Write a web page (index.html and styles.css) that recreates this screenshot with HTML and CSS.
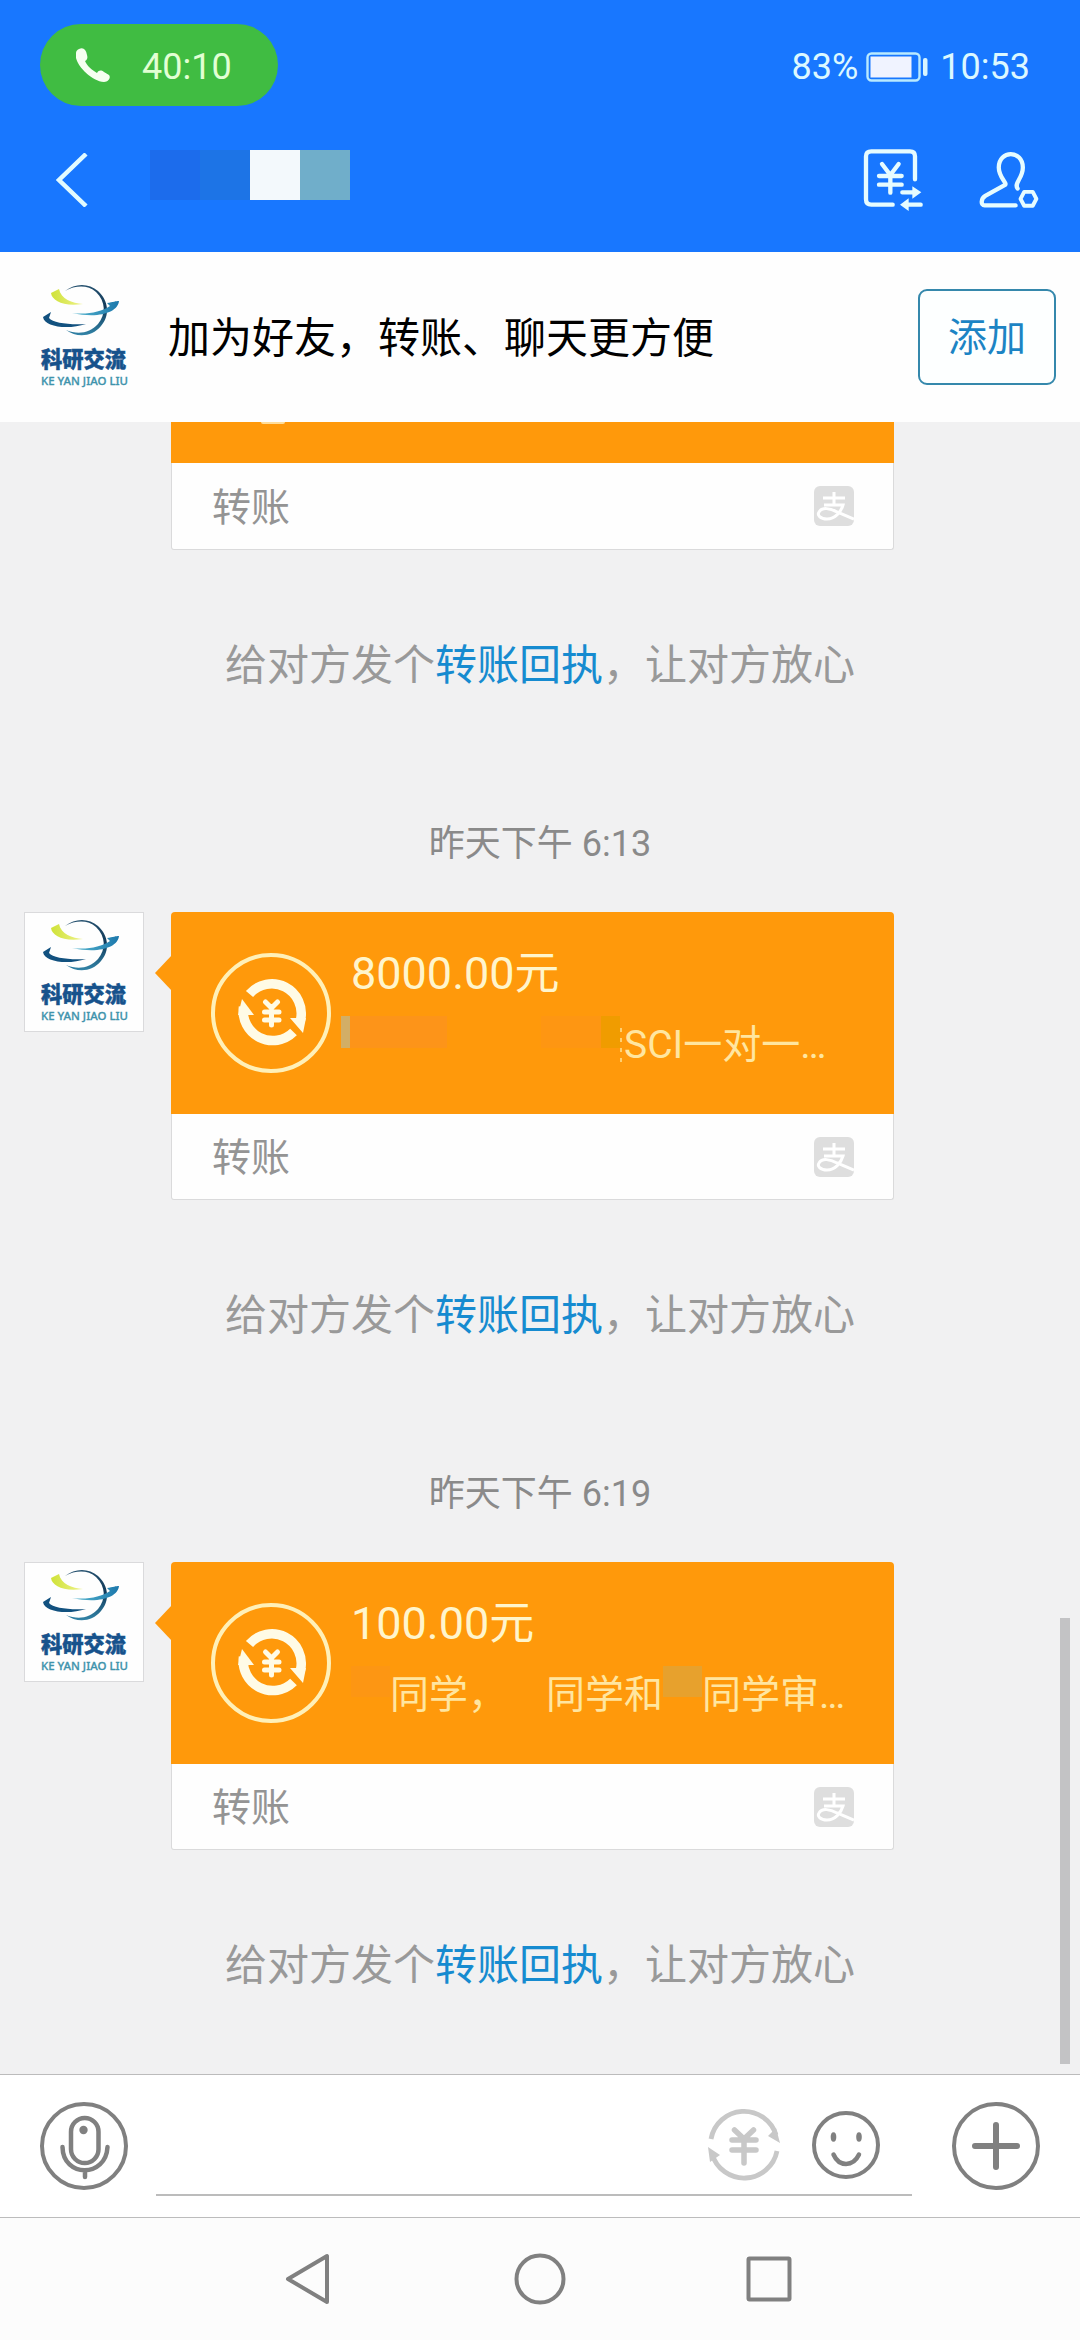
FILE: index.html
```html
<!DOCTYPE html>
<html lang="zh-CN">
<head>
<meta charset="utf-8">
<title>聊天</title>
<link rel="stylesheet" href="styles.css">
</head>
<body>
<svg class="defs" width="0" height="0">
  <defs>
    <linearGradient id="globe" x1="0" y1="0" x2="0" y2="1"><stop offset="0" stop-color="#24506e"/><stop offset=".45" stop-color="#123a5a"/><stop offset="1" stop-color="#3284a8"/></linearGradient>
    <linearGradient id="yellow"><stop offset="0" stop-color="#cfe238"/><stop offset="1" stop-color="#eef28a"/></linearGradient>
    <linearGradient id="sky"><stop offset="0" stop-color="#58b8d0"/><stop offset="1" stop-color="#1c78ac"/></linearGradient>
    <symbol id="logo" viewBox="0 0 120 120">
      <path fill="url(#globe)" d="M41 14C51 6 65 6 74 14C85 24 86 39 77 49C68 60 53 61 42 53C54 58 66 56 74 47C82 37 82 25 72 15C64 8 52 8 41 14Z"/>
      <path fill="url(#yellow)" d="M35 12L27 16C28 24 40 30 59 27C48 26 37 22 35 12Z"/>
      <path fill="url(#sky)" d="M48 36C63 38 77 35 86 29L83 26C89 25 92 24 95 24C94 35 76 42 48 36Z"/>
      <path fill="#12517f" d="M27 35L19 40C20 50 44 53 62 47C45 48 29 46 25 41Z"/>
      <text class="logo-name" x="17" y="90" textLength="85" lengthAdjust="spacingAndGlyphs">科研交流</text>
      <text class="logo-sub" x="17" y="108" textLength="87" lengthAdjust="spacingAndGlyphs">KE YAN JIAO LIU</text>
    </symbol>
    <symbol id="transfer" viewBox="0 0 120 120">
      <circle cx="60" cy="60" r="58" fill="none" stroke="#fff0b8" stroke-width="4"/>
      <g fill="none" stroke="#fffbe6" stroke-width="9.500">
        <path d="M38.500 41A29.500 29.500 0 0 1 89.500 67"/>
        <path d="M82.500 79A29.500 29.500 0 0 1 32.500 54"/>
      </g>
      <path fill="#fffbe6" d="M79 65L95 65L92 80ZM43 62L27 62L31 46Z"/>
      <path fill="none" stroke="#fffbe6" stroke-width="5" stroke-linecap="round" d="M54.500 49l6 6 6-6M53.500 59h14.500M53.500 67h14.500M60.500 57v15"/>
    </symbol>
    <symbol id="alipay" viewBox="0 0 40 40">
      <rect width="40" height="40" rx="6" fill="#dedede"/>
      <path fill="none" stroke="#fff" stroke-width="3" d="M9 12H31M20 6V19M10 19H29C27 26 21 33 13 33C6 33 3 29 5 26C8 21 16 22 23 26L40 33"/>
    </symbol>
  </defs>
</svg>

<header class="top">
  <div class="status">
    <div class="call">
      <svg class="phone" viewBox="0 0 34 34"><path fill="#f6fff0" d="M3 1C7-1 10 1 11 7C12 10 11 12 9 13C11 18 16 22 21 25C23 22 25 22 28 24L33 27C35 29 33 34 28 34C14 33-3 14 0 5C0 3 1 2 3 1Z"/></svg>
      <span>40:10</span>
    </div>
    <div class="info">
      <span>83%</span>
      <svg class="battery" viewBox="0 0 62 30"><rect x="1.500" y="1.500" width="52" height="27" rx="4" fill="none" stroke="#b9eaff" stroke-width="2.400"/><rect x="4.500" y="4.500" width="41" height="21" fill="#f0f3ff"/><rect x="57" y="6" width="4.500" height="18" rx="2" fill="#d8f5ff"/></svg>
      <span>10:53</span>
    </div>
  </div>
  <div class="titlebar">
    <svg class="back" viewBox="0 0 32 54"><path fill="none" stroke="#e2fbff" stroke-width="4.500" d="M30 1L3 27L30 53"/></svg>
    <div class="name"><i class="n1"></i><i class="n2"></i><i class="n3"></i><i class="n4"></i></div>
    <svg class="records" viewBox="36 24 186 198"><g fill="none" stroke="#e6fcff" stroke-width="13" stroke-linecap="round" stroke-linejoin="round"><path d="M195 121V52Q195 37 180 37H64Q48 37 48 52V181Q48 197 64 197H128"/><path d="M96 75L121 108L146 75M87 111H155M87 137H155M121 108V161M157 160H190M212 197H172"/></g><path fill="#e6fcff" d="M187 142L214 160L187 179ZM176 178L150 197L176 216Z"/></svg>
    <svg class="person" viewBox="384 30 188 180"><g fill="none" stroke="#e6fcff" stroke-width="13" stroke-linecap="round" stroke-linejoin="round"><path d="M498 197H404C392 197 392 177 406 168L466 135C474 129 447 113 447 82C447 28 520 28 520 82C520 115 492 130 504 146"/><path stroke-width="12" stroke-linecap="butt" d="M524 156H550L561 177L550 198H524L513 177Z"/></g></svg>
  </div>
</header>

<section class="addbar">
  <svg class="addlogo"><use href="#logo"/></svg>
  <span class="addtext">加为好友，转账、聊天更方便</span>
  <button class="addbtn">添加</button>
</section>

<main class="chat">
  <div class="card clipped">
    <div class="pay"><i class="peek"></i></div>
    <div class="foot"><span>转账</span><svg><use href="#alipay"/></svg></div>
  </div>
  <p class="notice">给对方发个<a>转账回执</a>，让对方放心</p>

  <p class="time">昨天下午 6:13</p>
  <div class="row">
    <svg class="avatar"><use href="#logo"/></svg>
    <div class="card">
      <div class="pay tail">
        <svg class="coin"><use href="#transfer"/></svg>
        <div class="text">
          <div class="amount">8000.00元</div>
          <div class="memo"><span class="blank"><i class="b1"></i><i class="b2"></i><i class="b3"></i><i class="b4"></i><i class="b5"></i></span>SCI一对一…</div>
        </div>
      </div>
      <div class="foot"><span>转账</span><svg><use href="#alipay"/></svg></div>
    </div>
  </div>
  <p class="notice">给对方发个<a>转账回执</a>，让对方放心</p>

  <p class="time">昨天下午 6:19</p>
  <div class="row">
    <svg class="avatar"><use href="#logo"/></svg>
    <div class="card">
      <div class="pay tail">
        <svg class="coin"><use href="#transfer"/></svg>
        <div class="text">
          <div class="amount">100.00元</div>
          <div class="memo"><span class="char faint"></span>同学，<span class="char"></span>同学和<span class="char mid"></span>同学审…</div>
        </div>
      </div>
      <div class="foot"><span>转账</span><svg><use href="#alipay"/></svg></div>
    </div>
  </div>
  <p class="notice">给对方发个<a>转账回执</a>，让对方放心</p>
  <div class="scroll"></div>
</main>

<footer class="compose">
  <svg class="round" viewBox="0 0 90 90"><g fill="none" stroke="#808080" stroke-width="4.500" stroke-linecap="round"><circle cx="45" cy="45" r="42" stroke-width="4"/><rect x="32" y="17" width="27.500" height="45" rx="13.700"/><path d="M23.500 46C24 77 67 77 68.500 46M46 71v5"/></g><circle cx="44.500" cy="29" r="4.200" fill="#808080"/></svg>
  <div class="field">
    <svg class="yen" viewBox="0 0 74 74"><g fill="none" stroke="#c8c8c8" stroke-width="4.800"><path d="M4 31A33.500 33.500 0 0 1 69 27M70 43A33.500 33.500 0 0 1 5 46"/><path stroke-width="5.500" stroke-linecap="round" d="M27.500 22L37 31L46.500 22M25 32H49M25 42H49M37 31V55"/></g><path fill="#c8c8c8" d="M61 28L69 20L73 35ZM1 39L13 47L3 54Z"/></svg>
    <svg class="smile" viewBox="0 0 68 70"><g fill="none" stroke="#808080" stroke-linecap="round"><circle cx="34" cy="35" r="32" stroke-width="4"/><path stroke-width="4.500" d="M21.500 44.500C27 57 41 57 47 44.500"/></g><ellipse cx="21.500" cy="27" rx="2.800" ry="4.700" fill="#808080"/><ellipse cx="47" cy="27" rx="2.800" ry="4.700" fill="#808080"/></svg>
  </div>
  <svg class="round plus" viewBox="0 0 90 90"><g fill="none" stroke="#808080" stroke-linecap="round"><circle cx="45" cy="45" r="42" stroke-width="4"/><path stroke-width="6" d="M24 45H66M45 24V66"/></g></svg>
</footer>

<nav class="nav">
  <svg viewBox="0 0 52 52"><path d="M42 3V49L3 26Z"/></svg>
  <svg viewBox="0 0 52 52"><circle cx="26" cy="26" r="23.500"/></svg>
  <svg viewBox="0 0 52 52"><rect x="5.500" y="5.500" width="41" height="41" rx="1"/></svg>
</nav>
</body>
</html>
```
FILE: styles.css
```css
* { box-sizing: border-box; }
body {
  margin: 0;
  width: 1080px;
  height: 2340px;
  overflow: hidden;
  display: flex;
  flex-direction: column;
  font-family: Roboto, "Noto Sans CJK SC", sans-serif;
  background: #f1f1f2;
}
svg { display: block; flex: none; }
p { margin: 0; }
i { display: block; }
.defs { position: absolute; }

.top { height: 252px; background: #1877ff; color: #dcf8ff; flex: none; }
.status {
  height: 130px;
  padding: 0 50px 0 40px;
  display: flex;
  align-items: center;
  justify-content: space-between;
  font-size: 36px;
}
.call {
  width: 238px;
  height: 82px;
  padding-left: 36px;
  border-radius: 41px;
  background: #40bc42;
  color: #e2ffd4;
  display: flex;
  align-items: center;
}
.call span { margin-left: 32px; padding-top: 4px; }
.phone { width: 34px; height: 34px; }
.info { display: flex; align-items: center; padding-top: 4px; }
.battery { width: 62px; height: 30px; margin: 0 12px 0 8px; }
.titlebar { display: flex; align-items: center; padding: 0 40px 0 56px; height: 100px; }
.back { width: 32px; height: 54px; }
.name { display: flex; margin: -10px auto 0 62px; }
.name i { width: 50px; height: 50px; }
.n1 { background: #1c6cec; }
.n2 { background: #1d74e6; }
.n3 { background: #f3f9fc; }
.n4 { background: #70aeca; }
.records { width: 62px; height: 66px; margin-right: 54px; }
.person { width: 62px; height: 60px; }

.addbar {
  height: 170px;
  flex: none;
  padding: 0 24px;
  background: #fefefe;
  display: flex;
  align-items: center;
}
.addlogo { width: 120px; height: 120px; }
.logo-name { font: 900 22px "Noto Sans CJK SC", sans-serif; fill: #17528c; stroke: #17528c; stroke-width: .5px; }
.logo-sub { font: 500 11.5px "Noto Sans", sans-serif; fill: #3f93ac; stroke: #3f93ac; stroke-width: .3px; }
.addtext { margin: 0 auto 0 24px; padding-bottom: 6px; font-size: 42px; color: #000; }
.addbtn {
  width: 138px;
  height: 96px;
  padding: 0 0 6px;
  border: 2px solid #3588ac;
  border-radius: 9px;
  background: #fdffff;
  color: #1c84c4;
  font: 39px Roboto, "Noto Sans CJK SC", sans-serif;
}

.chat { position: relative; height: 1652px; flex: none; }
.card { width: 723px; flex: none; }
.clipped { margin-left: 171px; }
.clipped .pay { height: 41px; }
.clipped .foot { height: 87px; }
.peek { width: 24px; height: 2px; margin-left: 90px; border-radius: 0 0 12px 12px; background: #ffdd9a; }
.pay { height: 202px; background: #ff990b; display: flex; }
.row .pay { border-radius: 4px 4px 0 0; }
.tail { position: relative; }
.tail::before {
  content: "";
  position: absolute;
  left: -16px;
  top: 43px;
  width: 17px;
  height: 36px;
  background: #ff990b;
  clip-path: polygon(100% 0, 0 50%, 100% 100%);
}
.coin { width: 120px; height: 120px; margin: 41px 0 0 40px; }
.text { margin-left: 20px; white-space: nowrap; }
.amount { margin-top: 30px; font-size: 45px; line-height: 64px; color: #fff5cc; }
.memo { display: flex; margin-top: 10px; font-size: 39px; line-height: 58px; color: #ffe6a0; }
.blank { display: flex; width: 282px; height: 32px; margin-left: -10px; margin-right: 1px; }
.b1 { width: 9px; background: #d2ae66; }
.b2 { width: 97px; background: #fd9419; }
.b3 { width: 60px; margin: 0 0 0 94px; background: #fe9612; }
.b4 { width: 19px; background: #f09c00; }
.b5 { width: 2px; height: 34px; margin-top: 12px; background: repeating-linear-gradient(#ffcf70 0 4px, transparent 4px 10px); }
.char { width: 39px; height: 31px; }
.faint { background: #fd9613; }
.mid { background: #e7a12d; }
.foot {
  height: 86px;
  padding: 0 39px 0 40px;
  background: #fefefe;
  border: 1px solid #dadadb;
  border-top: 0;
  border-radius: 0 0 3px 3px;
  display: flex;
  align-items: center;
  justify-content: space-between;
  font-size: 39px;
  color: #949494;
}
.foot span { padding-bottom: 5px; }
.foot svg { width: 40px; height: 40px; }
.notice, .time { display: flex; align-items: center; justify-content: center; white-space: nowrap; }
.notice { height: 228px; padding-bottom: 6px; font-size: 42px; color: #999; }
.notice a { color: #168bd0; }
.time { height: 134px; padding-bottom: 10px; font-size: 36px; color: #8a8a8a; white-space: pre; }
.row { display: flex; padding-left: 24px; }
.avatar { width: 120px; height: 120px; margin-right: 27px; background: #fefefe; outline: 1px solid #dadadc; outline-offset: -1px; }
.scroll { position: absolute; left: 1060px; top: 1196px; width: 10px; height: 446px; background: #c3c3c5; }

.compose {
  height: 144px;
  flex: none;
  padding: 0 39px;
  border-top: 1px solid #bcbcbc;
  border-bottom: 1px solid #bcbcbc;
  background: #fff;
  display: flex;
  align-items: center;
}
.round { width: 90px; height: 90px; }
.field {
  align-self: flex-start;
  width: 756px;
  height: 98px;
  margin: 23px auto 0 27px;
  border-bottom: 2px solid #bcbcbc;
  display: flex;
  align-items: center;
  justify-content: flex-end;
  gap: 31px;
  padding: 0 32px 2px 0;
}
.yen { width: 74px; height: 74px; }
.smile { width: 68px; height: 70px; }

.nav {
  flex: 1;
  background: #fcfcfc;
  display: flex;
  justify-content: center;
  align-items: center;
  gap: 177px;
}
.nav svg { width: 52px; height: 52px; fill: none; stroke: #808080; stroke-width: 4; stroke-linejoin: round; }
```
